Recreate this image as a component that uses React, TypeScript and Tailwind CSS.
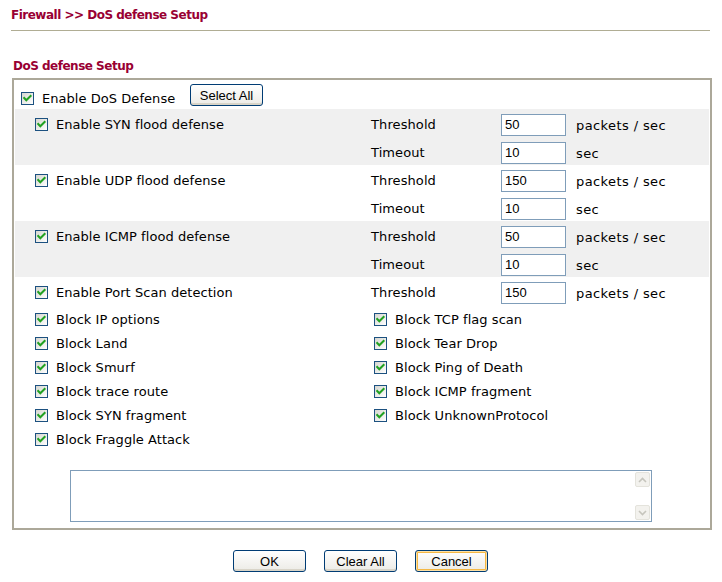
import React from "react";

const Check = () => (
  <span className="inline-flex w-[13px] h-[13px] shrink-0 border border-[#1c5180] bg-linear-to-br from-[#d6d6d0] to-white items-center justify-center">
    <svg width="11" height="11" viewBox="0 0 11 11">
      <path d="M2.2 5 L4.3 7.2 L8.6 2.9" fill="none" stroke="#21a121" strokeWidth="2" strokeLinecap="square" />
    </svg>
  </span>
);

const CheckLabel = ({ label }: { label: string }) => (
  <div className="flex items-center gap-[8px]">
    <Check />
    <span className="whitespace-nowrap pt-[1px] tracking-[0.05px]">{label}</span>
  </div>
);

const Field = ({ value }: { value: string }) => (
  <input
    readOnly
    defaultValue={value}
    className="w-[65px] h-[22px] border border-[#7f9db9] bg-white px-[3px] text-[13px] text-black font-['Liberation_Sans',Arial,sans-serif] outline-none"
  />
);

const Btn = ({ label, hot }: { label: string; hot?: boolean }) => (
  <button
    className={
      "w-[73px] h-[22px] border border-[#003c74] rounded-[3px] bg-linear-to-b from-white to-[#ecebe6] text-[13px] text-black font-['Liberation_Sans',Arial,sans-serif] leading-none " +
      (hot ? "shadow-[inset_0_0_0_1px_#fce0a6,inset_0_0_0_2px_#f5b844]" : "shadow-[inset_0_-2px_0_#d8d4c8]")
    }
  >
    {label}
  </button>
);

const FloodRows = ({ label, th, to, gray }: { label: string; th: string; to: string; gray?: boolean }) => (
  <div className={"mx-[1px] " + (gray ? "bg-[#f0f0f0]" : "")}>
    <div className="grid grid-cols-[356px_130px_75px_1fr] h-[28px] items-center pt-[3px]">
      <div className="pl-[20px]">
        <CheckLabel label={label} />
      </div>
      <div className="tracking-[0.1px]">Threshold</div>
      <div className="flex items-center">
        <Field value={th} />
      </div>
      <div className="pt-[2px] tracking-[0.4px]">packets / sec</div>
    </div>
    <div className="grid grid-cols-[356px_130px_75px_1fr] h-[28px] items-center pt-[3px]">
      <div />
      <div className="tracking-[0.1px]">Timeout</div>
      <div className="flex items-center">
        <Field value={to} />
      </div>
      <div className="pt-[2px] tracking-[0.4px]">sec</div>
    </div>
  </div>
);

const Arrow = ({ up }: { up?: boolean }) => (
  <div className="w-[15px] h-[15px] border border-[#e4e3dc] bg-[#f3f2ee] rounded-[2px] flex items-center justify-center">
    <svg width="9" height="6" viewBox="0 0 9 6">
      <path d={up ? "M1 5 L4.5 1.5 L8 5" : "M1 1 L4.5 4.5 L8 1"} fill="none" stroke="#c6c5bd" strokeWidth="1.6" />
    </svg>
  </div>
);

export default function App() {
  const left = [
    "Block IP options",
    "Block Land",
    "Block Smurf",
    "Block trace route",
    "Block SYN fragment",
    "Block Fraggle Attack",
  ];
  const right = [
    "Block TCP flag scan",
    "Block Tear Drop",
    "Block Ping of Death",
    "Block ICMP fragment",
    "Block UnknownProtocol",
  ];
  return (
    <div className="w-[722px] h-[582px] bg-white text-black text-[13px] font-['DejaVu_Sans',Verdana,sans-serif] overflow-hidden">
      <div className="h-[30px] flex items-center pl-[11px] text-[12px] font-bold text-[#990033] tracking-[-0.5px]">
        Firewall &gt;&gt; DoS defense Setup
      </div>
      <div className="ml-[11px] w-[699px] h-px bg-[#b0ad94]" />
      <div className="h-[47px] flex items-end pb-[3px] pl-[13px] text-[12px] font-bold text-[#990033] tracking-[-0.5px]">
        DoS defense Setup
      </div>
      <div className="ml-[12px] w-[700px] h-[452px] border-2 border-[#aca899] flex flex-col">
        <div className="h-[29px] flex items-start pt-[8px] pl-[7px]">
          <div className="flex items-center gap-[8px] w-[169px]">
            <Check />
            <span className="whitespace-nowrap pt-[1px] tracking-[0.05px]">Enable DoS Defense</span>
          </div>
          <div className="-mt-[4px]">
            <Btn label="Select All" />
          </div>
        </div>
        <FloodRows label="Enable SYN flood defense" th="50" to="10" gray />
        <FloodRows label="Enable UDP flood defense" th="150" to="10" />
        <FloodRows label="Enable ICMP flood defense" th="50" to="10" gray />
        <div className="mx-[1px] grid grid-cols-[356px_130px_75px_1fr] h-[28px] items-center pt-[3px]">
          <div className="pl-[20px]">
            <CheckLabel label="Enable Port Scan detection" />
          </div>
          <div className="tracking-[0.1px]">Threshold</div>
          <div className="flex items-center">
            <Field value="150" />
          </div>
          <div className="pt-[2px] tracking-[0.4px]">packets / sec</div>
        </div>
        <div className="mt-[2px] ml-[21px] grid grid-cols-[339px_1fr]">
          <div className="flex flex-col">
            {left.map((l) => (
              <div key={l} className="h-[24px] flex items-center">
                <CheckLabel label={l} />
              </div>
            ))}
          </div>
          <div className="flex flex-col">
            {right.map((l) => (
              <div key={l} className="h-[24px] flex items-center">
                <CheckLabel label={l} />
              </div>
            ))}
          </div>
        </div>
        <div className="mt-[19px] ml-[56px] w-[582px] h-[52px] border border-[#7f9db9] bg-white flex justify-end">
          <div className="w-[17px] h-full flex flex-col items-center justify-between py-[1px]">
            <Arrow up />
            <Arrow />
          </div>
        </div>
      </div>
      <div className="mt-[20px] flex justify-center gap-[18px] pr-[1px]">
        <Btn label="OK" />
        <Btn label="Clear All" />
        <Btn label="Cancel" hot />
      </div>
    </div>
  );
}
